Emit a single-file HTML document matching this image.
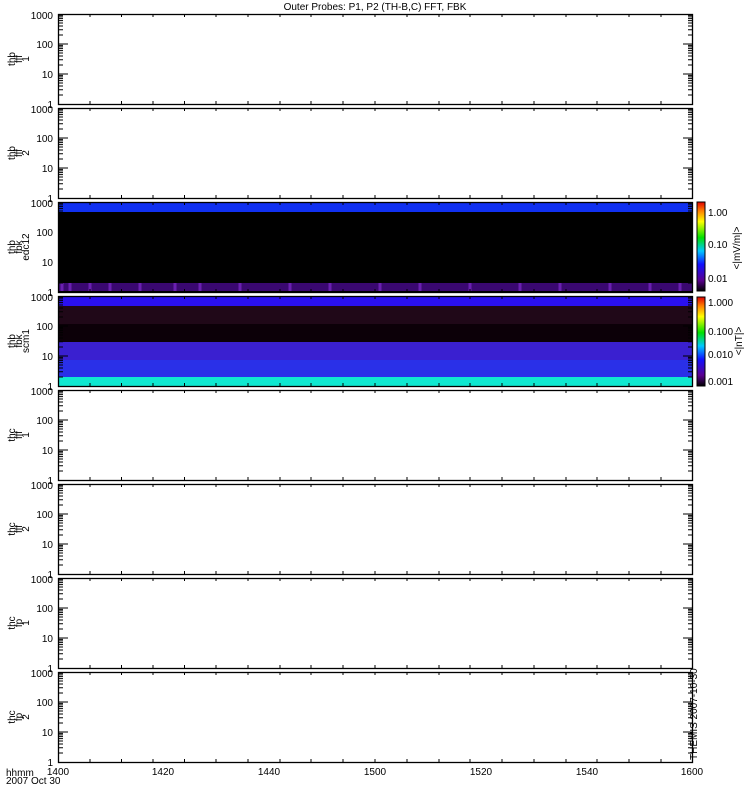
<!DOCTYPE html>
<html><head><meta charset="utf-8"><style>
body{margin:0;background:#fff;width:750px;height:800px;overflow:hidden}
svg{display:block}
text{font-family:"Liberation Sans",sans-serif;font-size:10px;fill:#000}
</style></head><body>
<svg width="750" height="800" viewBox="0 0 750 800">
<defs>
<linearGradient id="cb" x1="0" y1="1" x2="0" y2="0">
<stop offset="0" stop-color="#000"/><stop offset="0.12" stop-color="#5a0090"/><stop offset="0.3" stop-color="#1010ff"/><stop offset="0.45" stop-color="#00c8ff"/><stop offset="0.6" stop-color="#00e000"/><stop offset="0.78" stop-color="#ffff00"/><stop offset="0.9" stop-color="#ff8000"/><stop offset="1" stop-color="#e00000"/>
</linearGradient>
<g id="ax">
<rect x="58.5" y="0.5" width="634" height="90" fill="none" stroke="#000" stroke-width="1.3"/>
<path stroke="#000" stroke-width="1" fill="none" d="M58 60h10M58 30h10M693 60h-10M693 30h-10
M58 80.97h5M58 75.69h5M58 71.94h5M58 69.03h5M58 66.66h5M58 64.65h5M58 62.91h5M58 61.37h5
M58 50.97h5M58 45.69h5M58 41.94h5M58 39.03h5M58 36.66h5M58 34.65h5M58 32.91h5M58 31.37h5
M58 20.97h5M58 15.69h5M58 11.94h5M58 9.03h5M58 6.66h5M58 4.65h5M58 2.91h5M58 1.37h5
M693 80.97h-5M693 75.69h-5M693 71.94h-5M693 69.03h-5M693 66.66h-5M693 64.65h-5M693 62.91h-5M693 61.37h-5
M693 50.97h-5M693 45.69h-5M693 41.94h-5M693 39.03h-5M693 36.66h-5M693 34.65h-5M693 32.91h-5M693 31.37h-5
M693 20.97h-5M693 15.69h-5M693 11.94h-5M693 9.03h-5M693 6.66h-5M693 4.65h-5M693 2.91h-5M693 1.37h-5
M90 0v3M121.5 0v3M153 0v3M184.5 0v3M216 0v3M248 0v3M280 0v3M311 0v3M343 0v3M375 0v3M407 0v3M439 0v3M470 0v3M502 0v3M534 0v3M566 0v3M597 0v3M629 0v3M661 0v3
M90 90v-3M121.5 90v-3M153 90v-3M184.5 90v-3M216 90v-3M248 90v-3M280 90v-3M311 90v-3M343 90v-3M375 90v-3M407 90v-3M439 90v-3M470 90v-3M502 90v-3M534 90v-3M566 90v-3M597 90v-3M629 90v-3M661 90v-3"/>
<text x="53" y="5" text-anchor="end">1000</text>
<text x="53" y="34" text-anchor="end">100</text>
<text x="53" y="64" text-anchor="end">10</text>
<text x="53" y="94" text-anchor="end">1</text>
</g>
</defs>
<text x="375" y="10" text-anchor="middle">Outer Probes: P1, P2 (TH-B,C) FFT, FBK</text>

<rect x="58" y="202" width="635" height="90" fill="#000"/>
<rect x="58" y="202" width="635" height="10" fill="#1030f0"/>
<rect x="58" y="283" width="635" height="8" fill="#3a0870"/>
<path d="M62 283v8M70 283v8M90 283v8M110 283v8M140 283v8M175 283v8M200 283v8M240 283v8M290 283v8M330 283v8M380 283v8M420 283v8M470 283v8M520 283v8M560 283v8M610 283v8M650 283v8M680 283v8" stroke="#6a20b0" stroke-width="3"/>
<rect x="58" y="296" width="635" height="90" fill="#100008"/>
<rect x="58" y="296" width="635" height="10" fill="#2a10f0"/>
<rect x="58" y="306" width="635" height="18" fill="#200818"/>
<rect x="58" y="324" width="635" height="18" fill="#0c0008"/>
<rect x="58" y="342" width="635" height="18" fill="#3a20d0"/>
<rect x="58" y="360" width="635" height="17" fill="#2a30e8"/>
<rect x="58" y="377" width="635" height="9" fill="#10e8d0"/>

<use href="#ax" y="14"/>
<use href="#ax" y="108"/>
<use href="#ax" y="202"/>
<use href="#ax" y="296"/>
<use href="#ax" y="390"/>
<use href="#ax" y="484"/>
<use href="#ax" y="578"/>
<use href="#ax" y="672"/>

<g font-size="8">
<text transform="translate(15,59) rotate(-90)" text-anchor="middle">thb</text>
<text transform="translate(22,59) rotate(-90)" text-anchor="middle">fff</text>
<text transform="translate(29,59) rotate(-90)" text-anchor="middle">1</text>
<text transform="translate(15,153) rotate(-90)" text-anchor="middle">thb</text>
<text transform="translate(22,153) rotate(-90)" text-anchor="middle">fff</text>
<text transform="translate(29,153) rotate(-90)" text-anchor="middle">2</text>
<text transform="translate(15,247) rotate(-90)" text-anchor="middle">thb</text>
<text transform="translate(22,247) rotate(-90)" text-anchor="middle">fbk</text>
<text transform="translate(29,247) rotate(-90)" text-anchor="middle">edc12</text>
<text transform="translate(15,341) rotate(-90)" text-anchor="middle">thb</text>
<text transform="translate(22,341) rotate(-90)" text-anchor="middle">fbk</text>
<text transform="translate(29,341) rotate(-90)" text-anchor="middle">scm1</text>
<text transform="translate(15,435) rotate(-90)" text-anchor="middle">thc</text>
<text transform="translate(22,435) rotate(-90)" text-anchor="middle">fff</text>
<text transform="translate(29,435) rotate(-90)" text-anchor="middle">1</text>
<text transform="translate(15,529) rotate(-90)" text-anchor="middle">thc</text>
<text transform="translate(22,529) rotate(-90)" text-anchor="middle">fff</text>
<text transform="translate(29,529) rotate(-90)" text-anchor="middle">2</text>
<text transform="translate(15,623) rotate(-90)" text-anchor="middle">thc</text>
<text transform="translate(22,623) rotate(-90)" text-anchor="middle">fp</text>
<text transform="translate(29,623) rotate(-90)" text-anchor="middle">1</text>
<text transform="translate(15,717) rotate(-90)" text-anchor="middle">thc</text>
<text transform="translate(22,717) rotate(-90)" text-anchor="middle">fp</text>
<text transform="translate(29,717) rotate(-90)" text-anchor="middle">2</text>
</g>

<rect x="697" y="202" width="8" height="89" fill="url(#cb)" stroke="#000"/>
<rect x="697" y="297" width="8" height="89" fill="url(#cb)" stroke="#000"/>
<g font-size="9">
<text x="708" y="216">1.00</text>
<text x="708" y="248">0.10</text>
<text x="708" y="282">0.01</text>
<text x="708" y="306">1.000</text>
<text x="708" y="335">0.100</text>
<text x="708" y="358">0.010</text>
<text x="708" y="385">0.001</text>
<text transform="translate(740,248) rotate(-90)" text-anchor="middle">&lt;|mV/m|&gt;</text>
<text transform="translate(742,341) rotate(-90)" text-anchor="middle">&lt;|nT|&gt;</text>
</g>
<text transform="translate(697,760) rotate(-90)" font-size="5">THEMIS 2007-10-30</text>

<g font-size="10">
<text x="58" y="775" text-anchor="middle">1400</text>
<text x="163" y="775" text-anchor="middle">1420</text>
<text x="269" y="775" text-anchor="middle">1440</text>
<text x="375" y="775" text-anchor="middle">1500</text>
<text x="481" y="775" text-anchor="middle">1520</text>
<text x="587" y="775" text-anchor="middle">1540</text>
<text x="692" y="775" text-anchor="middle">1600</text>
<text x="6" y="776" font-size="9">hhmm</text>
<text x="6" y="784" font-size="9">2007 Oct 30</text>
</g>
</svg>
</body></html>
